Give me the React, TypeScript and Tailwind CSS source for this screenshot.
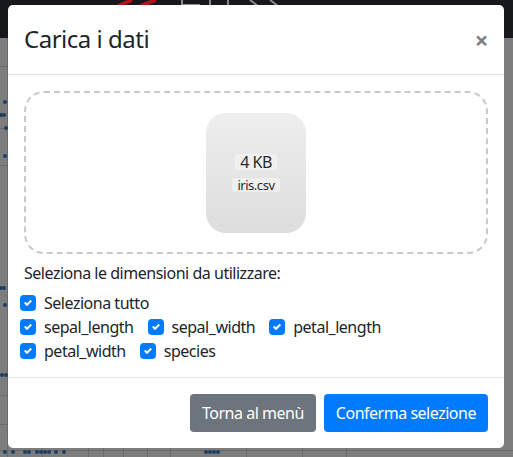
import React from "react";

const Check = () => (
  <span className="flex h-4 w-4 shrink-0 items-center justify-center rounded-[4px] bg-[#007bff]">
    <svg width="8" height="8" viewBox="0 0 8 8">
      <path fill="#fff" d="M6.564.75l-3.59 3.612-1.538-1.55L0 4.26 2.974 7.25 8 2.193z" />
    </svg>
  </span>
);

const Item = ({ label }: { label: string }) => (
  <label className="mr-[14px] flex items-center gap-2">
    <Check />
    <span>{label}</span>
  </label>
);

const dots: [number, number][] = [
  [5, 102], [1, 115], [4, 115], [6, 128], [5, 156], [1, 288], [4, 288], [5, 305],
  [2, 375], [6, 375], [5, 452], [13, 452], [25, 452], [29, 452], [37, 452], [41, 452],
  [45, 452], [49, 452], [56, 452], [64, 452], [206, 452], [210, 452], [214, 452], [218, 452],
];

export default function App() {
  return (
    <div
      className="relative h-[457px] w-[513px] overflow-hidden bg-[#7d7d7d] tracking-[-0.03em] text-[#212529]"
      style={{ fontFamily: '"Noto Sans", "Open Sans", sans-serif' }}
    >
      {/* page behind the backdrop */}
      <div className="h-[38px] bg-[#17181b]" />
      <div className="absolute left-[7px] top-[38px] h-[419px] w-px bg-[#6a6a6a]" />
      <div className="absolute left-0 top-[66px] h-px w-[8px] bg-[#6a6a6a]" />
      <div className="absolute left-0 top-[128px] h-px w-[8px] bg-[#6a6a6a]" />
      <div className="absolute left-0 top-[165px] h-px w-[8px] bg-[#6a6a6a]" />
      <div className="absolute left-0 top-[395px] h-px w-[8px] bg-[#6a6a6a]" />
      <div className="absolute left-0 top-[424px] h-px w-[8px] bg-[#6a6a6a]" />
      <div className="absolute left-0 top-[450px] h-px w-[513px] bg-[#6a6a6a]" />
      {[42, 88, 103, 123, 147, 170, 246, 302, 346].map((x) => (
        <div key={x} className="absolute top-[447px] h-[10px] w-px bg-[#6a6a6a]" style={{ left: x }} />
      ))}
      {dots.map(([x, y], i) => (
        <div
          key={i}
          className="absolute h-[4px] w-[4px] rounded-full bg-[#1d3f63]"
          style={{ left: x - 2, top: y - 2 }}
        />
      ))}
      <svg className="absolute left-[110px] top-0" width="180" height="6" viewBox="0 0 180 6">
        <path d="M8 6 L22 0 M30 6 L46 0" stroke="#b3121a" strokeWidth="4" fill="none" />
        <path d="M72 0 V6 M72 5 H90 M100 0 V6 M118 0 V6 M140 0 L148 6 M160 0 L168 6" stroke="#8a8a8e" strokeWidth="2" fill="none" />
      </svg>

      {/* modal */}
      <div className="absolute left-[8px] top-[5px] flex w-[496px] flex-col rounded-[5px] bg-white">
        <div className="flex items-start justify-between border-b border-[#dee2e6] p-4">
          <h4 className="text-[24px] leading-[36px]">Carica i dati</h4>
          <button className="mt-[1px] text-[24px] font-bold leading-[36px] text-[#808080]">×</button>
        </div>
        <div className="px-4 pb-[14px] pt-4">
          <div className="flex h-[163px] items-center justify-center rounded-[20px] border-2 border-dashed border-[#c9c9c9]">
            <div className="flex h-[120px] w-[100px] flex-col items-center justify-center rounded-[20px] bg-gradient-to-b from-[#eeeeee] to-[#dddddd] text-[#2b2b2b]">
              <span className="rounded-[2px] bg-white/40 px-[5px] text-[16px] leading-[16px]">4 KB</span>
              <span className="mt-[8px] rounded-[2px] bg-white/40 px-[5px] text-[13px] leading-[14px]">iris.csv</span>
            </div>
          </div>
          <p className="mb-[6px] mt-[7px] text-[16px] leading-6">Seleziona le dimensioni da utilizzare:</p>
          <div className="-ml-1 flex flex-col text-[16px] leading-6">
            <div className="flex">
              <Item label="Seleziona tutto" />
            </div>
            <div className="flex">
              <Item label="sepal_length" />
              <Item label="sepal_width" />
              <Item label="petal_length" />
            </div>
            <div className="flex">
              <Item label="petal_width" />
              <Item label="species" />
            </div>
          </div>
        </div>
        <div className="flex justify-end gap-2 border-t border-[#dee2e6] px-4 py-4">
          <button className="rounded-[4px] bg-[#6c757d] px-3 py-[7px] text-[16px] leading-6 text-white">Torna al menù</button>
          <button className="rounded-[4px] bg-[#007bff] px-3 py-[7px] text-[16px] leading-6 text-white">Conferma selezione</button>
        </div>
      </div>
    </div>
  );
}
